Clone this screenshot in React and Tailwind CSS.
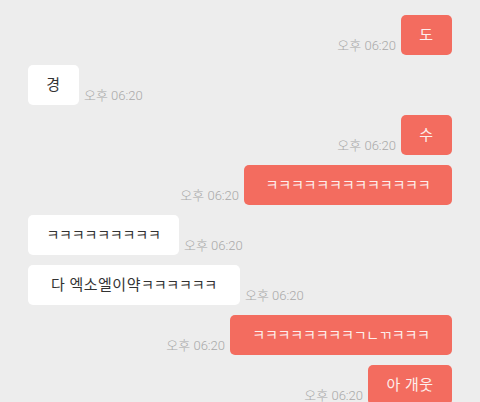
import React from 'react';

const messages = [
  { me: true, text: '도', w: 'w-[51px]' },
  { me: false, text: '경', w: 'w-[51px]' },
  { me: true, text: '수', w: 'w-[51px]' },
  { me: true, text: 'ㅋㅋㅋㅋㅋㅋㅋㅋㅋㅋㅋㅋㅋ', w: 'w-[208px]' },
  { me: false, text: 'ㅋㅋㅋㅋㅋㅋㅋㅋㅋ', w: 'w-[151px]' },
  { me: false, text: '다 엑소엘이약ㅋㅋㅋㅋㅋㅋ', w: 'w-[212px]' },
  { me: true, text: 'ㅋㅋㅋㅋㅋㅋㅋㅋㄱㄴㄲㅋㅋㅋ', w: 'w-[222px]' },
  { me: true, text: '아 개웃', w: 'w-[84px]' },
];

// jamo runs are smaller in the phone font, so shrink them a bit
function renderText(text) {
  const parts = text.split(/([\u3131-\u318E]+)/).filter(Boolean);
  return parts.map((p, i) =>
    /[\u3131-\u318E]/.test(p) ? (
      <span key={i} className="text-[14px] tracking-[-0.2px]">{p}</span>
    ) : (
      <span key={i} className="tracking-[0.5px]">{p}</span>
    )
  );
}

function Time() {
  return (
    <span className="text-[13px] leading-4 font-light text-[#a9a9a9] whitespace-nowrap pb-[1px]">
      오후 06:20
    </span>
  );
}

export default function App() {
  return (
    <div
      className="w-[480px] h-[402px] overflow-hidden bg-[#ededed] px-[28px] pt-[15px] flex flex-col gap-[10px]"
      style={{ fontFamily: 'Roboto, "Noto Sans CJK KR", sans-serif' }}
    >
      {messages.map((m, i) => (
        <div key={i} className={`flex items-end gap-[5px] ${m.me ? 'justify-end' : 'justify-start'}`}>
          {m.me && <Time />}
          <div
            className={`${m.w} h-10 shrink-0 rounded-[5px] flex items-center justify-center text-[15px] whitespace-nowrap ${
              m.me ? 'bg-[#f36c5f] text-[#fdeeec]' : 'bg-white text-[#333333]'
            }`}
          >
            {renderText(m.text)}
          </div>
          {!m.me && <Time />}
        </div>
      ))}
    </div>
  );
}
